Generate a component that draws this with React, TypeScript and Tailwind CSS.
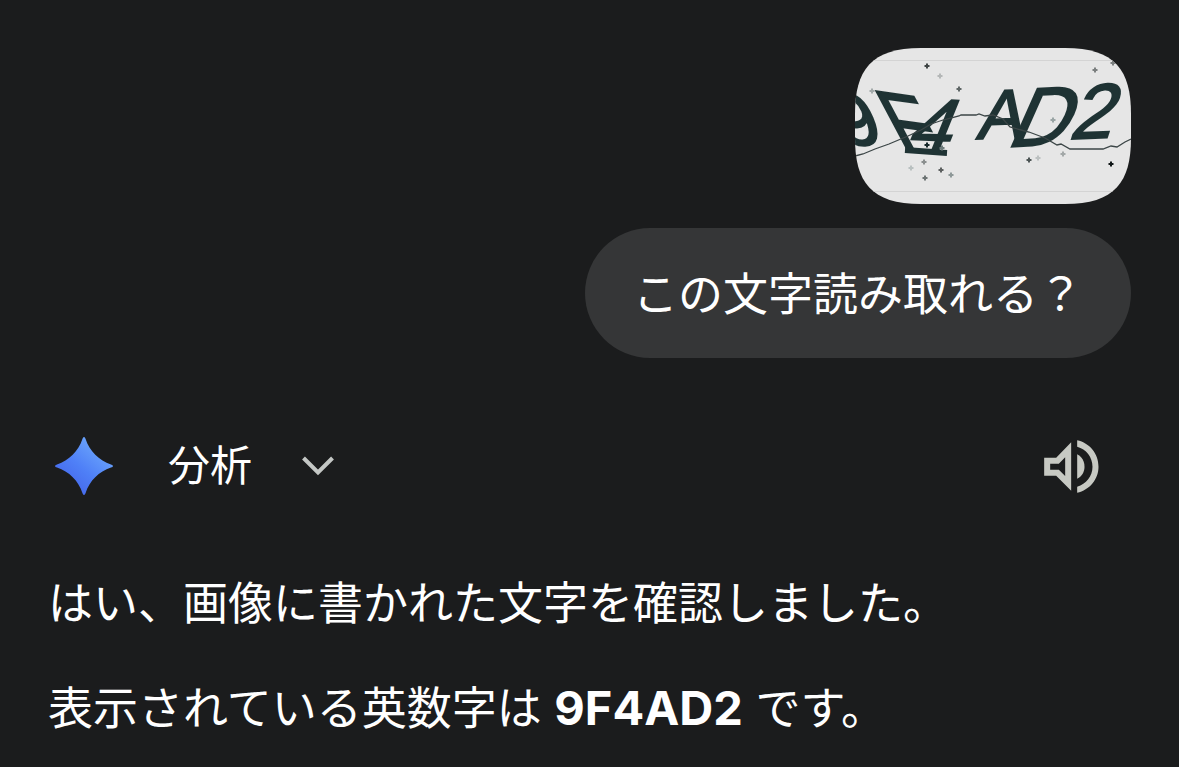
const JP = "font-['Inter','Noto_Sans_CJK_JP',sans-serif]";

type Speck = { x: number; y: number; c: string };

const specks: Speck[] = [
  { x: 72, y: 18, c: '#3f4444' },
  { x: 85, y: 28, c: '#b4b7b7' },
  { x: 17, y: 43, c: '#a3aaaa' },
  { x: 104, y: 41, c: '#5f6666' },
  { x: 72, y: 97, c: '#16282a' },
  { x: 87, y: 100, c: '#6d7a7a' },
  { x: 69, y: 114, c: '#8b8f8f' },
  { x: 56, y: 120, c: '#b9c0c0' },
  { x: 86, y: 122, c: '#5d6060' },
  { x: 96, y: 127, c: '#8f9999' },
  { x: 70, y: 130, c: '#6e7575' },
  { x: 240, y: 22, c: '#7b7f7f' },
  { x: 258, y: 15, c: '#7b7f7f' },
  { x: 198, y: 72, c: '#9aa5a5' },
  { x: 174, y: 112, c: '#4c5454' },
  { x: 183, y: 110, c: '#bcc0c0' },
  { x: 208, y: 106, c: '#a3a8a8' },
  { x: 256, y: 116, c: '#101617' },
];

function CaptchaImage() {
  return (
    <svg viewBox="0 0 276 156" role="img" className="h-[156px] w-[276px]">
      <defs>
        <clipPath id="thumb">
          <path d="M0 66C0 22 16 0 66 0H210C260 0 276 22 276 66V90C276 134 260 156 210 156H66C16 156 0 134 0 90Z" />
        </clipPath>
      </defs>
      <g clipPath="url(#thumb)">
        <rect width="276" height="156" fill="#e6e6e6" />
        <path d="M0 12.5H276M0 143.5H276" stroke="#d4d4d4" />
        <g
          fill="#1f3334"
          stroke="#1f3334"
          strokeWidth="2"
          fontFamily="Liberation Sans, sans-serif"
        >
          <text transform="translate(-10 98) rotate(-3) skewX(20)" fontSize="76">9</text>
          <text transform="translate(46 101) rotate(8) skewX(36)" fontSize="78">F</text>
          <text transform="translate(50 103) rotate(2) skewX(-20)" fontSize="76">4</text>
          <text transform="translate(121 91) rotate(-2) skewX(-13)" fontSize="69">A</text>
          <text transform="translate(150 99) rotate(-3) skewX(-27)" fontSize="82">D</text>
          <text transform="translate(213 91) rotate(-2) skewX(-20)" fontSize="77">2</text>
        </g>
        <path d="M50 102L92 105" stroke="#1f3334" strokeWidth="6" />
        <path
          d="M0 108L8 106L20 101L34 96L53 88L66 82L76 76L88 72L104 68L106 67H121L124 66L130 68L138 67L148 71L155 79L166 82L174 84L190 90L202 97L206 96L215 101H248L256 98L262 99L270 94L276 91"
          fill="none"
          stroke="#3c4647"
          strokeWidth="1.3"
        />
        {specks.map((s) => (
          <path
            key={`${s.x}-${s.y}`}
            d={`M${s.x - 2.5} ${s.y}H${s.x + 2.5}M${s.x} ${s.y - 2.5}V${s.y + 2.5}`}
            stroke={s.c}
            strokeWidth="2"
          />
        ))}
      </g>
    </svg>
  );
}

function SparkIcon() {
  return (
    <svg viewBox="0 0 58 58" className="size-[58px]" aria-hidden="true">
      <defs>
        <linearGradient id="spark" x1="0.2" y1="0.85" x2="0.8" y2="0.15">
          <stop offset="0" stopColor="#4568ec" />
          <stop offset="0.45" stopColor="#4f80f7" />
          <stop offset="1" stopColor="#6ca6fb" />
        </linearGradient>
      </defs>
      <path
        fill="url(#spark)"
        d="M29 0Q30 0 30.600 2C34.500 14 44 23.500 56 27.400Q58 28 58 29Q58 30 56 30.600C44 34.500 34.500 44 30.600 56Q30 58 29 58Q28 58 27.400 56C23.500 44 14 34.500 2 30.600Q0 30 0 29Q0 28 2 27.400C14 23.500 23.500 14 27.400 2Q28 0 29 0Z"
      />
    </svg>
  );
}

function ChevronIcon() {
  return (
    <svg viewBox="0 0 32 20" className="h-5 w-8" aria-hidden="true">
      <path d="M1.500 2L16 16.500L30.500 2" fill="none" stroke="#c4c7c5" strokeWidth="4" />
    </svg>
  );
}

function SpeakerIcon() {
  return (
    <svg viewBox="42 43 164 159" className="h-[53px] w-[55px]" aria-hidden="true">
      <g fill="#c7c9c3">
        <path
          fillRule="evenodd"
          d="M42 96H78L123 50V195L78 150H42ZM60 114V132H86L105 151V95L86 114Z"
        />
        <path d="M141 86C155 93 163 107 163 123C163 139 155 152 141 159Z" />
        <path d="M141 44C178 52 205 84 205 123C205 161 178 193 141 201V183C168 175 187 151 187 123C187 94 168 70 141 63Z" />
      </g>
    </svg>
  );
}

export default function App() {
  return (
    <main lang="ja" className={`min-h-screen bg-[#1b1c1d] p-12 pb-6 text-white ${JP}`}>
      <section className="flex flex-col items-end gap-6">
        <CaptchaImage />
        <p className="rounded-full bg-[#353637] px-12 pt-[34px] pb-[30px] text-[45px] leading-[66px]">
          この文字読み取れる？
        </p>
      </section>

      <section className="mt-[72px]">
        <header className="flex h-[72px] items-center justify-between pr-8 pl-[7px]">
          <div className="flex items-center gap-[55px]">
            <SparkIcon />
            <button type="button" className="flex items-center gap-[50px] text-[42px] leading-[60px]">
              分析
              <ChevronIcon />
            </button>
          </div>
          <button type="button" aria-label="読み上げる">
            <SpeakerIcon />
          </button>
        </header>

        <div className="mt-[66px] flex flex-col gap-8 text-[45px] leading-[72px]">
          <p>はい、画像に書かれた文字を確認しました。</p>
          <p>
            表示されている英数字は <strong className="text-[47px] font-bold">9F4AD2</strong> です。
          </p>
        </div>
      </section>
    </main>
  );
}
